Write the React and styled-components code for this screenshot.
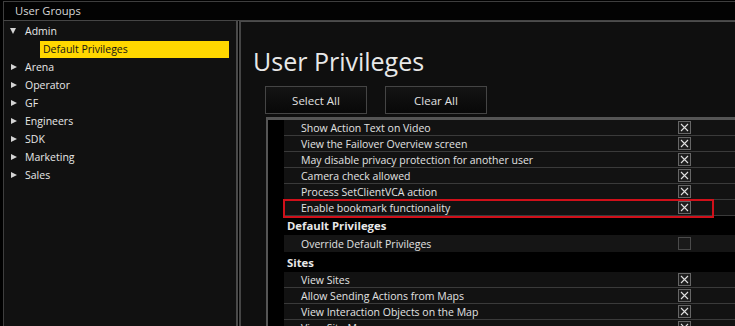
import React from "react";
import styled, { createGlobalStyle } from "styled-components";

const GlobalStyle = createGlobalStyle`
  html, body {
    margin: 0;
    padding: 0;
    background: #000;
    overflow: hidden;
  }
  body {
    font-family: "Open Sans", "Noto Sans", sans-serif;
  }
`;

const Window = styled.div`
  width: 735px;
  height: 326px;
  box-sizing: border-box;
  padding: 1px 0 0 3px;
  display: flex;
  flex-direction: column;
  overflow: hidden;
  background: #000;
`;

const TitleBar = styled.div`
  height: 19px;
  box-sizing: border-box;
  border-top: 1px solid #3e3e3e;
  border-left: 1px solid #3e3e3e;
  background: #030303;
  color: #d8d8d8;
  font-size: 11.2px;
  line-height: 18px;
  padding-left: 11px;
`;

const Body = styled.div`
  flex: 1;
  display: flex;
  min-height: 0;
  border-top: 1px solid #454545;
`;

const GroupPanel = styled.div`
  width: 235px;
  box-sizing: border-box;
  border-left: 1px solid #3e3e3e;
  border-right: 2px solid #4a4a4a;
  background: #111;
  padding-top: 1px;
`;

const TreeRow = styled.div`
  height: 18px;
  display: flex;
  align-items: center;
  padding-left: ${(p) => p.indent}px;
  color: #e8e8e8;
  font-size: 10.5px;
`;

const Arrow = styled.span`
  width: 0;
  height: 0;
  margin-right: 9px;
  ${(p) =>
    p.open
      ? `border-left: 3.5px solid transparent;
         border-right: 3.5px solid transparent;
         border-top: 6px solid #d4d4d4;`
      : `border-top: 3.5px solid transparent;
         border-bottom: 3.5px solid transparent;
         border-left: 6px solid #d4d4d4;
         margin-left: 1px;
         margin-right: 8px;`}
`;

const Highlight = styled.div`
  width: 189px;
  height: 17px;
  background: #ffd700;
  color: #151515;
  display: flex;
  align-items: center;
  padding-left: 3px;
  box-sizing: border-box;
`;

const Gap = styled.div`
  width: 1px;
  background: #000;
`;

const PrivPanel = styled.div`
  flex: 1;
  min-width: 0;
  border-left: 2px solid #454545;
  border-top: 1px solid #4c4c4c;
  background: #0f0f0f;
  display: flex;
  flex-direction: column;
`;

const Heading = styled.div`
  color: #e8e8e8;
  font-size: 25px;
  line-height: 30px;
  margin: 24px 0 0 12px;
`;

const ButtonRow = styled.div`
  display: flex;
  gap: 18px;
  margin: 10px 0 0 24px;
`;

const Button = styled.div`
  width: 102px;
  height: 28px;
  box-sizing: border-box;
  border: 1px solid #454545;
  background: linear-gradient(#141414, #080808);
  color: #e0e0e0;
  font-size: 11.5px;
  display: flex;
  align-items: center;
  justify-content: center;
`;

const Table = styled.div`
  margin: 3px 0 0 25px;
  border-top: 3px solid #555;
  border-left: 2px solid #555;
  flex: 1;
  display: flex;
  flex-direction: column;
  background: #000;
`;

const Row = styled.div`
  position: relative;
  height: ${(p) => (p.plain ? 17 : 16)}px;
  flex-shrink: 0;
  margin-left: 16px;
  box-sizing: border-box;
  display: grid;
  grid-template-columns: 394px 13px 1fr;
  align-items: center;
  background: ${(p) => (p.plain ? "#151515" : "#121212")};
  border-bottom: ${(p) => (p.plain ? "none" : "1px solid #3a3a3a")};
  color: #e2e2e2;
  font-size: 10.5px;
  white-space: nowrap;
`;

const RowLabel = styled.span`
  padding-left: 17px;
`;

const SectionHeader = styled.div`
  height: ${(p) => p.h}px;
  flex-shrink: 0;
  display: flex;
  align-items: center;
  padding-left: 19px;
  color: #e8e8e8;
  font-size: 11.3px;
  font-weight: 700;
  background: #000;
`;

const Box = styled.div`
  width: 13px;
  height: 13px;
  box-sizing: border-box;
  border: 1px solid ${(p) => (p.checked ? "#666" : "#4a4a4a")};
  background: ${(p) => (p.checked ? "#1e1e1e" : "#1a1a1a")};
  display: flex;
  align-items: center;
  justify-content: center;
`;

const Marker = styled.div`
  position: absolute;
  left: -1px;
  top: -1px;
  width: 431px;
  height: 19px;
  box-sizing: border-box;
  border: 2px solid #d0101a;
  pointer-events: none;
`;

function Check({ checked }) {
  return (
    <Box checked={checked}>
      {checked && (
        <svg width="9" height="9" viewBox="0 0 9 9">
          <path d="M1 1 L8 8 M8 1 L1 8" stroke="#e0e0e0" strokeWidth="1.1" />
        </svg>
      )}
    </Box>
  );
}

const groups = ["Arena", "Operator", "GF", "Engineers", "SDK", "Marketing", "Sales"];

const general = [
  "Show Action Text on Video",
  "View the Failover Overview screen",
  "May disable privacy protection for another user",
  "Camera check allowed",
  "Process SetClientVCA action",
];

const sites = [
  "View Sites",
  "Allow Sending Actions from Maps",
  "View Interaction Objects on the Map",
  "View Site Map",
];

function PrivRow({ label, checked = true, plain, marked }) {
  return (
    <Row plain={plain}>
      <RowLabel>{label}</RowLabel>
      <Check checked={checked} />
      <span />
      {marked && <Marker />}
    </Row>
  );
}

export default function App() {
  return (
    <>
      <GlobalStyle />
      <Window>
        <TitleBar>User Groups</TitleBar>
        <Body>
          <GroupPanel>
            <TreeRow indent={6}>
              <Arrow open />
              Admin
            </TreeRow>
            <TreeRow indent={36}>
              <Highlight>Default Privileges</Highlight>
            </TreeRow>
            {groups.map((g) => (
              <TreeRow key={g} indent={6}>
                <Arrow />
                {g}
              </TreeRow>
            ))}
          </GroupPanel>
          <Gap />
          <PrivPanel>
            <Heading>User Privileges</Heading>
            <ButtonRow>
              <Button>Select All</Button>
              <Button>Clear All</Button>
            </ButtonRow>
            <Table>
              {general.map((l) => (
                <PrivRow key={l} label={l} />
              ))}
              <PrivRow label="Enable bookmark functionality" marked />
              <SectionHeader h={19}>Default Privileges</SectionHeader>
              <PrivRow label="Override Default Privileges" checked={false} plain />
              <SectionHeader h={20}>Sites</SectionHeader>
              {sites.map((l) => (
                <PrivRow key={l} label={l} />
              ))}
            </Table>
          </PrivPanel>
        </Body>
      </Window>
    </>
  );
}
